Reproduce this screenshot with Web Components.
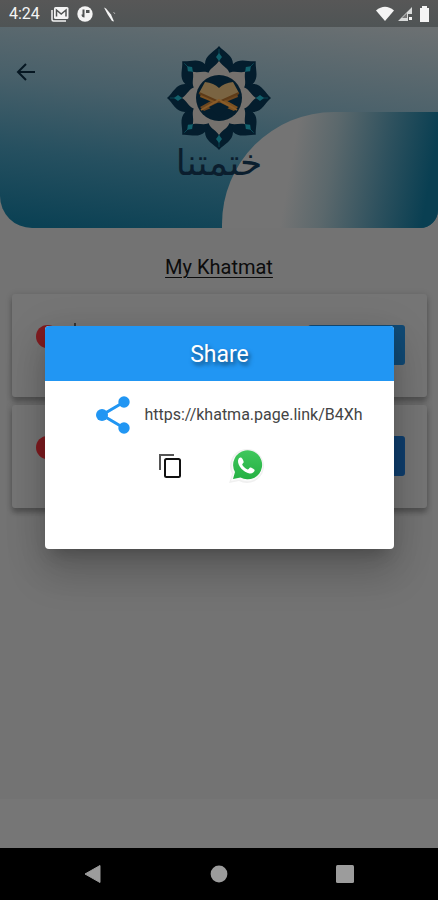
<!DOCTYPE html>
<html lang="en">
<head>
<meta charset="utf-8">
<meta name="viewport" content="width=device-width, initial-scale=1">
<title>My Khatmat</title>
<style>
html, body { margin: 0; height: 100%; }
body { font-family: Roboto, "Liberation Sans", sans-serif; background: #000; }
</style>
</head>
<body>
<khatma-app></khatma-app>
<script>
const define = (name, html) => customElements.define(name, class extends HTMLElement {
  constructor() {
    super();
    const t = document.createElement('template');
    t.innerHTML = html;
    this.attachShadow({ mode: 'open' }).append(t.content.cloneNode(true));
  }
});

define('status-bar', `
<style>
:host { display: flex; align-items: center; justify-content: space-between; height: 27px; padding: 0 6px 0 9px; background: linear-gradient(#575757, #4f5455); color: #f4f4f4; font-size: 16px; line-height: 28px; }
.group { display: flex; align-items: center; gap: 8px; }
.right { gap: 3px; }
svg { display: block; }
time { margin-right: 3px; }
</style>
<div class="group">
  <time>4:24</time>
  <svg width="18" height="16" viewBox="0 0 18 16" aria-hidden="true"><path d="M1 4v9.500q0 1.500 1.500 1.500H15" fill="none" stroke="#f4f4f4" stroke-width="1.500"/><rect x="3" y="1" width="14.500" height="12" rx="1.500" fill="#f4f4f4"/><path d="M5.500 10.500V4l4.700 4L15 4v6.500" fill="none" stroke="#505353" stroke-width="1.500"/></svg>
  <svg width="16" height="16" viewBox="0 0 16 16" aria-hidden="true"><circle cx="8" cy="8" r="7.700" fill="#f4f4f4"/><path d="M5.500 3.500h2v8q-3 0-3-3h1z" fill="#505353"/><path d="M9 4h3.500v3H9z" fill="#505353"/></svg>
  <svg width="18" height="16" viewBox="0 0 18 16" aria-hidden="true"><path d="M3 1.500l2 1 5 6 3 7-2-.5-4-6z" fill="#f4f4f4"/><path d="M12.500 6l1.500 2" stroke="#aaa"/></svg>
</div>
<div class="group right">
  <svg width="18" height="16" viewBox="0 0 18 16" aria-hidden="true"><path d="M0 4.500Q9-3 18 4.500L9 15z" fill="#f4f4f4"/></svg>
  <svg width="16" height="16" viewBox="0 0 16 16" aria-hidden="true"><path d="M15 1v7h-4v7H1z" fill="#d8dada"/><path d="M5 12l5-5v5z" fill="#777"/><path d="M12 11h3v3h-3z" fill="#f4f4f4"/></svg>
  <svg width="16" height="16" viewBox="0 0 16 16" aria-hidden="true"><path d="M6 0h5v2h2v14H4V2h2z" fill="#f4f4f4"/></svg>
</div>`);

define('khatma-logo', `
<style>
:host { display: flex; flex-direction: column; align-items: center; color: #0b1e2e; }
svg { display: block; }
.word { font: 36px/44px "DejaVu Sans", sans-serif; margin-top: -10px; direction: rtl; }
</style>
<svg width="106" height="106" viewBox="-53 -53 106 106" role="img" aria-label="Flower emblem with an open book">
  <defs>
    <path id="outer" d="M0-52C5-46 14-43 14-34Q14-30 12-27L8-18H-8L-12-27Q-14-30-14-34C-14-43-5-46 0-52Z" fill="#041d2d"/>
    <g id="inner"><path d="M0-37C4-31 10-30 11-23L8-15H-8L-11-23C-10-30-4-31 0-37Z" fill="#75716d"/><path d="M0-45l3 4-3 4-3-4z" fill="#12606b"/><path d="M0-49v12" stroke="#12606b" stroke-width=".6"/></g>
  </defs>
  <use href="#outer"/><use href="#outer" transform="rotate(45)"/><use href="#outer" transform="rotate(90)"/><use href="#outer" transform="rotate(135)"/><use href="#outer" transform="rotate(180)"/><use href="#outer" transform="rotate(225)"/><use href="#outer" transform="rotate(270)"/><use href="#outer" transform="rotate(315)"/>
  <use href="#inner"/><use href="#inner" transform="rotate(45)"/><use href="#inner" transform="rotate(90)"/><use href="#inner" transform="rotate(135)"/><use href="#inner" transform="rotate(180)"/><use href="#inner" transform="rotate(225)"/><use href="#inner" transform="rotate(270)"/><use href="#inner" transform="rotate(315)"/>
  <circle r="23" fill="#041d2d"/>
  <path d="M-19 9L8-6 18-5 19-1-15 13z" fill="#6b4620"/>
  <path d="M19 9L-8-6-18-5-19-1 15 13z" fill="#7c5222"/>
  <path d="M-10 9L0 4 10 9 0 19z" fill="#041d2d"/>
  <path d="M-14-16Q-5-15 0-10Q5-15 14-16L20-5 1 3-1 3-20-5z" fill="#7a6442"/>
  <path d="M-20-5L0 4L20-5" fill="none" stroke="#5e3b18" stroke-width="2"/>
  <path d="M-18 12L0 2L18 12" fill="none" stroke="#8a5c28" stroke-width="2"/>
</svg>
<span class="word" lang="ar">ختمتنا</span>`);

define('page-header', `
<style>
:host { display: grid; grid-template-columns: 1fr auto 1fr; align-items: start; position: relative; height: 201px; overflow: hidden; border-radius: 0 0 18px 32px; background: linear-gradient(187deg, #6b7072 2%, #48606a 40%, #265060 68%, #0b4154 97%); }
.wave { position: absolute; right: 0; bottom: 0; width: 49.300%; height: 116px; border-radius: 112px 0 0 0; background: linear-gradient(100deg, #747474 33%, #5b686c 50%, #2e515e 73%, #093f52 93%); }
button { grid-column: 1; justify-self: start; margin: 33px 0 0 14px; padding: 0; border: 0; background: none; position: relative; }
svg { display: block; }
khatma-logo { grid-column: 2; margin-top: 18px; position: relative; }
</style>
<div class="wave"></div>
<button aria-label="Back"><svg width="24" height="24" viewBox="0 0 24 24"><path d="M21 12H4M12 4l-8 8 8 8" fill="none" stroke="#061722" stroke-width="2"/></svg></button>
<khatma-logo></khatma-logo>`);

define('khatma-card', `
<style>
:host { display: flex; justify-content: space-between; align-items: flex-start; box-sizing: border-box; height: 103px; padding: 31px 22px 0 24px; border-radius: 3px; background: #757575; box-shadow: 0 5px 5px rgba(0,0,0,.22), 0 1px 7px rgba(0,0,0,.16); }
.badge { width: 23px; height: 23px; border-radius: 50%; background: #801c20; }
button { width: 97px; height: 40px; border: 0; border-radius: 3px; background: var(--action, #114a75); }
.lead { display: flex; gap: 15px; }
.tick { width: 2px; height: 3px; margin-top: -2px; background: #333; }
:host([plain]) .tick { visibility: hidden; }
</style>
<div class="lead"><span class="badge"></span><span class="tick"></span></div>
<button aria-label="Open khatma"></button>`);

define('share-dialog', `
<style>
:host { display: block; flex: 1; border-radius: 4px; overflow: hidden; background: #fff; box-shadow: 0 11px 15px -7px rgba(0,0,0,.2), 0 24px 38px 3px rgba(0,0,0,.14), 0 9px 40px 4px rgba(0,0,0,.1); }
h2 { margin: 0; padding-top: 2px; background: #2196f3; color: #fff; font-size: 23px; font-weight: 400; line-height: 53px; text-align: center; text-shadow: 2px 3px 4px rgba(0,0,0,.55); }
.body { box-sizing: border-box; min-height: 168px; padding-top: 14px; }
.link { display: flex; align-items: center; justify-content: center; gap: 12px; padding-left: 18px; }
a { color: #444; font-size: 16px; line-height: 24px; text-decoration: none; }
.actions { display: flex; justify-content: center; gap: 40px; margin-top: 11px; padding-right: 24px; }
button { display: grid; place-items: center; width: 36px; height: 40px; padding: 0; border: 0; background: none; }
svg { display: block; }
</style>
<h2>Share</h2>
<div class="body">
  <div class="link">
    <svg width="38" height="40" viewBox="0 0 38 40" aria-hidden="true"><g fill="#2196f3"><circle cx="8" cy="20" r="6"/><circle cx="30" cy="7" r="5.700"/><circle cx="30" cy="33" r="5.700"/></g><path d="M30 7L8 20l22 13" fill="none" stroke="#2196f3" stroke-width="3"/></svg>
    <a href="https://khatma.page.link/B4Xh">https://khatma.page.link/B4Xh</a>
  </div>
  <div class="actions">
    <button aria-label="Copy link"><svg width="24" height="28" viewBox="0 0 24 28"><path d="M2 18V3h14" fill="none" stroke="#555" stroke-width="2"/><rect x="7" y="7" width="15" height="18" rx="1.500" fill="none" stroke="#111" stroke-width="2"/></svg></button>
    <button aria-label="Share on WhatsApp"><svg width="36" height="36" viewBox="0 0 36 36">
      <defs><linearGradient id="g" x2="0" y2="1"><stop stop-color="#3fc75c"/><stop offset="1" stop-color="#25b043"/></linearGradient></defs>
      <path d="M1 35l3-9A17 17 0 1 1 11 33z" fill="#f0f0f0"/>
      <path d="M3 33l2.500-8A15.500 15.500 0 1 1 12 31.500z" fill="#fafafa"/>
      <path d="M5 31l2-7A14.500 14.500 0 1 1 12.500 29.500z" fill="url(#g)"/>
      <path d="M13 9.500c-1-.5-2.700.5-3 3.300C9.700 18 15.500 24.500 21.500 25.500c3 .4 5.200-1.500 5.200-3.400 0-.8-3.800-3-4.700-2.600-.8.400-1.400 2-2.200 2-1.700-.4-5-3.200-5.600-5 0-.8 1.500-1.700 1.500-2.600 0-.8-1.500-4-2.700-4.400z" fill="#fff"/>
    </svg></button>
  </div>
</div>`);

define('nav-bar', `
<style>
:host { display: flex; justify-content: center; gap: 86px; align-items: center; height: 52px; background: #000; }
button { width: 40px; height: 40px; padding: 0; border: 0; background: none; display: grid; place-items: center; }
svg { display: block; }
</style>
<button aria-label="Back"><svg width="18" height="18" viewBox="0 0 18 18"><path d="M1 9L16 .500v17z" fill="#9c9c9c" stroke="#9c9c9c" stroke-linejoin="round"/></svg></button>
<button aria-label="Home"><svg width="18" height="18" viewBox="0 0 18 18"><circle cx="9" cy="9" r="8.400" fill="#9c9c9c"/></svg></button>
<button aria-label="Recent apps"><svg width="18" height="18" viewBox="0 0 18 18"><rect width="18" height="18" rx="1.500" fill="#9c9c9c"/></svg></button>`);

define('khatma-app', `
<style>
:host { display: flex; flex-direction: column; min-height: 100vh; }
main { position: relative; flex: 1; display: flex; flex-direction: column; background: #737373; }
h1 { margin: 27px 0 0; font-size: 20px; font-weight: 400; line-height: 24px; text-align: center; text-decoration: underline; text-decoration-thickness: 1px; text-underline-offset: 3px; color: #0c0c0c; }
.cards { display: flex; flex-direction: column; gap: 8px; padding: 15px 11px 0 12px; }
.second { --action: #0f3f6e; }
.foot { height: 49px; margin-top: auto; background: #767676; }
.overlay { position: absolute; inset: 0; display: flex; align-items: center; padding: 0 44px 0 45px; }
</style>
<status-bar></status-bar>
<main>
  <page-header></page-header>
  <h1>My Khatmat</h1>
  <div class="cards"><khatma-card></khatma-card><khatma-card class="second" plain></khatma-card></div>
  <div class="foot"></div>
  <div class="overlay"><share-dialog role="dialog" aria-label="Share"></share-dialog></div>
</main>
<nav-bar></nav-bar>`);
</script>
</body>
</html>
